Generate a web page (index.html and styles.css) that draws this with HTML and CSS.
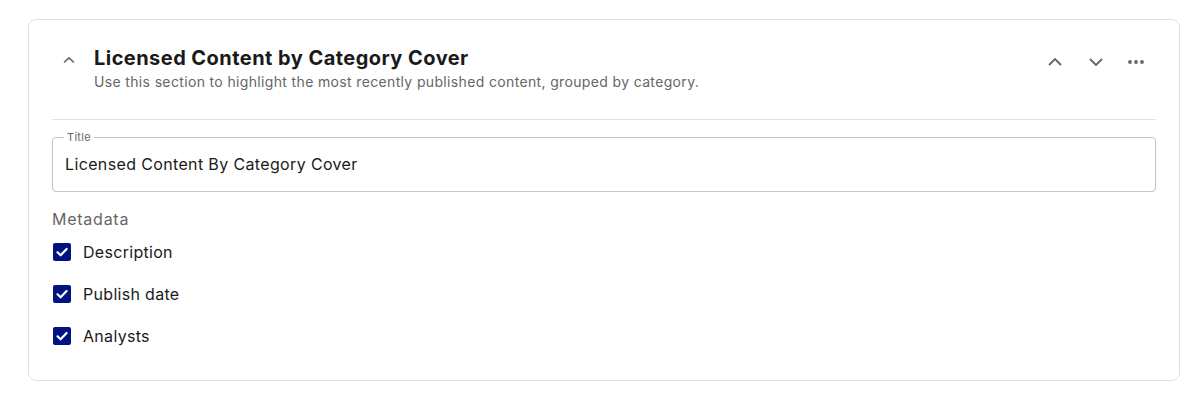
FILE: index.html
```html
<!DOCTYPE html>
<html>
<head>
<meta charset="utf-8">
<link rel="stylesheet" href="styles.css">
</head>
<body>
<div class="page">
  <section class="card">
    <header class="head">
      <button class="icon-btn collapse" aria-label="Collapse">
        <svg width="14" height="14" viewBox="0 0 14 14"><path d="M2.5 9 L7 4.8 L11.5 9" fill="none" stroke="#666" stroke-width="1.6" stroke-linecap="round" stroke-linejoin="round"/></svg>
      </button>
      <div class="head-text">
        <h2 class="title">Licensed Content by Category Cover</h2>
        <p class="subtitle">Use this section to highlight the most recently published content, grouped by category.</p>
      </div>
      <div class="actions">
        <button class="icon-btn" aria-label="Move up">
          <svg width="16" height="16" viewBox="0 0 16 16"><path d="M2.5 10.5 L8 5 L13.5 10.5" fill="none" stroke="#666" stroke-width="1.8" stroke-linecap="round" stroke-linejoin="round"/></svg>
        </button>
        <button class="icon-btn" aria-label="Move down">
          <svg width="16" height="16" viewBox="0 0 16 16"><path d="M2.5 5.5 L8 11 L13.5 5.5" fill="none" stroke="#666" stroke-width="1.8" stroke-linecap="round" stroke-linejoin="round"/></svg>
        </button>
        <button class="icon-btn more" aria-label="More">
          <svg width="18" height="16" viewBox="0 0 18 16"><circle cx="3" cy="8" r="1.9" fill="#666"/><circle cx="9" cy="8" r="1.9" fill="#666"/><circle cx="15" cy="8" r="1.9" fill="#666"/></svg>
        </button>
      </div>
    </header>
    <hr class="divider">
    <fieldset class="field">
      <legend class="field-label">Title</legend>
      <div class="field-value">Licensed Content By Category Cover</div>
    </fieldset>
    <div class="meta">
      <div class="meta-label">Metadata</div>
      <label class="check"><span class="box"><svg width="18" height="18" viewBox="0 0 18 18"><path d="M4.5 9.3 L7.6 12.3 L13.6 6" fill="none" stroke="#fff" stroke-width="2.2" stroke-linecap="round" stroke-linejoin="round"/></svg></span><span class="check-text">Description</span></label>
      <label class="check"><span class="box"><svg width="18" height="18" viewBox="0 0 18 18"><path d="M4.5 9.3 L7.6 12.3 L13.6 6" fill="none" stroke="#fff" stroke-width="2.2" stroke-linecap="round" stroke-linejoin="round"/></svg></span><span class="check-text">Publish date</span></label>
      <label class="check"><span class="box"><svg width="18" height="18" viewBox="0 0 18 18"><path d="M4.5 9.3 L7.6 12.3 L13.6 6" fill="none" stroke="#fff" stroke-width="2.2" stroke-linecap="round" stroke-linejoin="round"/></svg></span><span class="check-text">Analysts</span></label>
    </div>
  </section>
</div>
</body>
</html>
```

FILE: styles.css
```css
* { box-sizing: border-box; }
html, body { margin: 0; padding: 0; background: #fff; }
body { font-family: Inter, "Open Sans", sans-serif; color: #1a1a1a; }
.page { padding: 19px 16px 0 28px; }
.card {
  width: 1152px;
  height: 362px;
  border: 1px solid #e0e0e0;
  border-radius: 8px;
  padding: 24px 23px 0 23px;
}
.head { display: flex; align-items: flex-start; height: 75px; }
.icon-btn {
  border: 0; background: none; padding: 0; margin: 0;
  display: flex; align-items: center; justify-content: center; cursor: pointer;
}
.collapse { width: 14px; height: 14px; margin: 9px 18px 0 10px; }
.head-text { flex: 1; }
.title { margin: 0; font-size: 20px; line-height: 28px; font-weight: 700; color: #1a1a1a; letter-spacing: 0.45px; }
.subtitle { margin: 1px 0 0 0; font-size: 14px; line-height: 18px; color: #666; letter-spacing: 0.35px; }
.actions { display: flex; gap: 25px; margin: 10px 11px 0 0; }
.actions .icon-btn { width: 16px; height: 16px; }
.actions .more { width: 18px; margin-left: -2px; }
.divider { border: 0; border-top: 1px solid #e3e3e3; margin: 0; height: 0; }
.field {
  margin: 11px 0 0 0;
  padding: 0 12px;
  height: 61px;
  border: 1px solid #c4c4c4;
  border-radius: 4px;
}
.field-label { font-size: 11px; color: #666; padding: 0 3px; margin-left: -1px; line-height: 12px; letter-spacing: 0.3px; }
.field-value { font-size: 16px; line-height: 22px; padding-top: 10px; color: #1a1a1a; letter-spacing: 0.36px; }
.meta { margin-top: 17px; }
.meta-label { font-size: 16px; color: #666; line-height: 20px; height: 20px; letter-spacing: 0.75px; }
.check { display: flex; align-items: center; height: 42px; }
.check:nth-child(2) { margin-top: 2px; }
.box {
  width: 18px; height: 18px; border-radius: 2px; background: #00137f;
  display: flex; align-items: center; justify-content: center; margin-left: 1px; margin-right: 12px;
}
.check-text { font-size: 16px; color: #1a1a1a; letter-spacing: 0.3px; }
```
